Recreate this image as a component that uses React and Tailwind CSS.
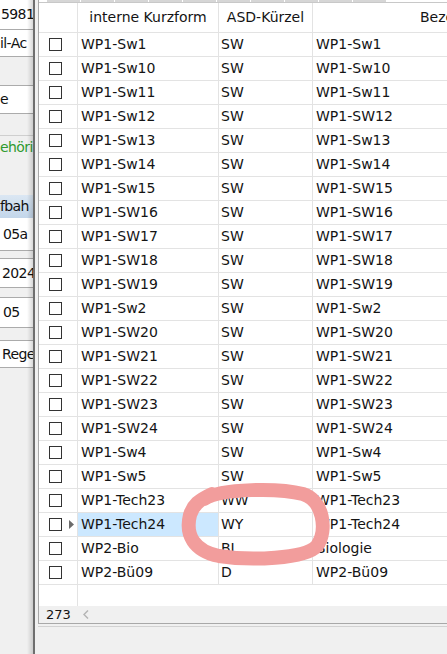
import React from "react";

const rows = [
  ["WP1-Sw1", "SW", "WP1-Sw1"],
  ["WP1-Sw10", "SW", "WP1-Sw10"],
  ["WP1-Sw11", "SW", "WP1-Sw11"],
  ["WP1-Sw12", "SW", "WP1-SW12"],
  ["WP1-Sw13", "SW", "WP1-Sw13"],
  ["WP1-Sw14", "SW", "WP1-Sw14"],
  ["WP1-Sw15", "SW", "WP1-SW15"],
  ["WP1-SW16", "SW", "WP1-SW16"],
  ["WP1-SW17", "SW", "WP1-SW17"],
  ["WP1-SW18", "SW", "WP1-SW18"],
  ["WP1-SW19", "SW", "WP1-SW19"],
  ["WP1-Sw2", "SW", "WP1-Sw2"],
  ["WP1-SW20", "SW", "WP1-SW20"],
  ["WP1-SW21", "SW", "WP1-SW21"],
  ["WP1-SW22", "SW", "WP1-SW22"],
  ["WP1-SW23", "SW", "WP1-SW23"],
  ["WP1-SW24", "SW", "WP1-SW24"],
  ["WP1-Sw4", "SW", "WP1-Sw4"],
  ["WP1-Sw5", "SW", "WP1-Sw5"],
  ["WP1-Tech23", "WW", "WP1-Tech23"],
  ["WP1-Tech24", "WY", "WP1-Tech24"],
  ["WP2-Bio", "BI", "Biologie"],
  ["WP2-Bü09", "D", "WP2-Bü09"],
];

const CURRENT = 20;

// form fields of the window behind the dialog, mostly hidden
function SideFields() {
  return (
    <div className="relative w-[33px] shrink-0 overflow-hidden whitespace-nowrap bg-[#f0f0f0] text-[14px] tracking-[-0.6px] text-[#111]">
      <div className="flex h-[30px] items-center border-b border-[#ababab] bg-white pl-[1px]">5981</div>
      <div className="flex h-[27px] items-center border-b border-[#ababab] bg-white">il-Ac</div>
      <div className="h-[28px]" />
      <div className="flex h-[29px] items-center border-y border-[#ababab] bg-white">e</div>
      <div className="h-[21px]" />
      <div className="flex h-[23px] items-center border-t border-[#cfcfcf] text-[#2f9a2f]">ehöri</div>
      <div className="h-[37px]" />
      <div className="flex h-[23px] items-center bg-linear-to-b from-[#dbe7f3] to-[#c3d6ea]">fbah</div>
      <div className="flex h-[33px] items-center border-b border-[#ababab] bg-white pl-[3px]">05a</div>
      <div className="h-[7px]" />
      <div className="flex h-[30px] items-center border-y border-[#ababab] bg-white pl-[2px]">2024</div>
      <div className="h-[9px]" />
      <div className="flex h-[31px] items-center border-y border-[#ababab] bg-white pl-[3px]">05</div>
      <div className="h-[12px]" />
      <div className="flex h-[28px] items-center border-y border-[#ababab] bg-white pl-[2px]">Rege</div>
      <div className="pointer-events-none absolute inset-y-0 right-0 w-[6px] bg-linear-to-r from-transparent to-black/15" />
    </div>
  );
}

function CheckBox() {
  return <div className="h-[13px] w-[13px] border border-[#333333] bg-white" />;
}

function GridRow({ row, current }) {
  return (
    <div className="flex h-[24px] border-b border-[#e3e3e3]">
      <div className="relative flex w-[39px] shrink-0 items-center border-r border-[#e3e3e3] pl-[10px]">
        <CheckBox />
        {current && (
          <svg className="absolute left-[30px] top-[7px]" width="5" height="9" viewBox="0 0 5 9">
            <path d="M0 0 L5 4.5 L0 9 Z" fill="#6b6b6b" />
          </svg>
        )}
      </div>
      <div className={`flex w-[141px] shrink-0 items-center border-r border-[#e3e3e3] pl-[3px] ${current ? "bg-[#cce8ff]" : ""}`}>
        {row[0]}
      </div>
      <div className="flex w-[94px] shrink-0 items-center border-r border-[#e3e3e3] pl-[2px]">{row[1]}</div>
      <div className="flex w-[304px] shrink-0 items-center pl-[3px]">{row[2]}</div>
    </div>
  );
}

function SubjectGrid() {
  return (
    <div className="w-[520px] border-b border-l border-[#a8a8a8] bg-white">
      <div className="flex h-[3px] gap-px border-b border-[#c8c8c8] pl-[8px]">
        {Array.from({ length: 10 }).map((_, i) => (
          <div key={i} className="h-[2px] w-[33px] bg-[#d6d6d6]" />
        ))}
      </div>
      <div className="flex h-[30px] border-b border-[#e3e3e3]">
        <div className="w-[39px] shrink-0 border-r border-[#e3e3e3]" />
        <div className="flex w-[141px] shrink-0 items-center justify-center border-r border-[#e3e3e3]">interne Kurzform</div>
        <div className="flex w-[94px] shrink-0 items-center justify-center border-r border-[#e3e3e3]">ASD-Kürzel</div>
        <div className="flex w-[304px] shrink-0 items-center justify-center">Bezeichnung</div>
      </div>
      {rows.map((row, i) => (
        <GridRow key={row[0]} row={row} current={i === CURRENT} />
      ))}
      <div className="flex h-[21px]">
        <div className="w-[39px] border-r border-[#e3e3e3]" />
      </div>
      <div className="flex h-[17px] items-center bg-[#f0f0f0]">
        <div className="w-[44px] pl-[7px] text-[13px]">273</div>
        <svg width="6" height="9" viewBox="0 0 6 9">
          <path d="M5 0.5 L1 4.5 L5 8.5" fill="none" stroke="#b4b4b4" strokeWidth="1.5" />
        </svg>
      </div>
    </div>
  );
}

export default function App() {
  return (
    <div className="relative flex h-[654px] w-[447px] overflow-hidden bg-[#f0f0f0] font-['DejaVu_Sans',sans-serif] text-[14px] text-[#141414]">
      <SideFields />
      <div className="flex-1 overflow-hidden border-l-2 border-[#6e6e6e] bg-[#f0f0f0] pl-[3px]">
        <SubjectGrid />
        <div className="mt-[2px] h-px w-full bg-[#d2d2d2]" />
      </div>
      {/* hand-drawn marker loop around the WY entry */}
      <svg className="pointer-events-none absolute left-0 top-0" width="447" height="654" viewBox="0 0 447 654">
        <path
          d="M204 499 C222 488 280 488 303 494 C323 500 328 530 317 546 C305 559 250 561 219 556 C194 551 185 535 190 515 C193 505 199 500 212 494"
          fill="none"
          stroke="#f29d9c"
          strokeWidth="14"
          strokeLinecap="round"
        />
      </svg>
    </div>
  );
}
